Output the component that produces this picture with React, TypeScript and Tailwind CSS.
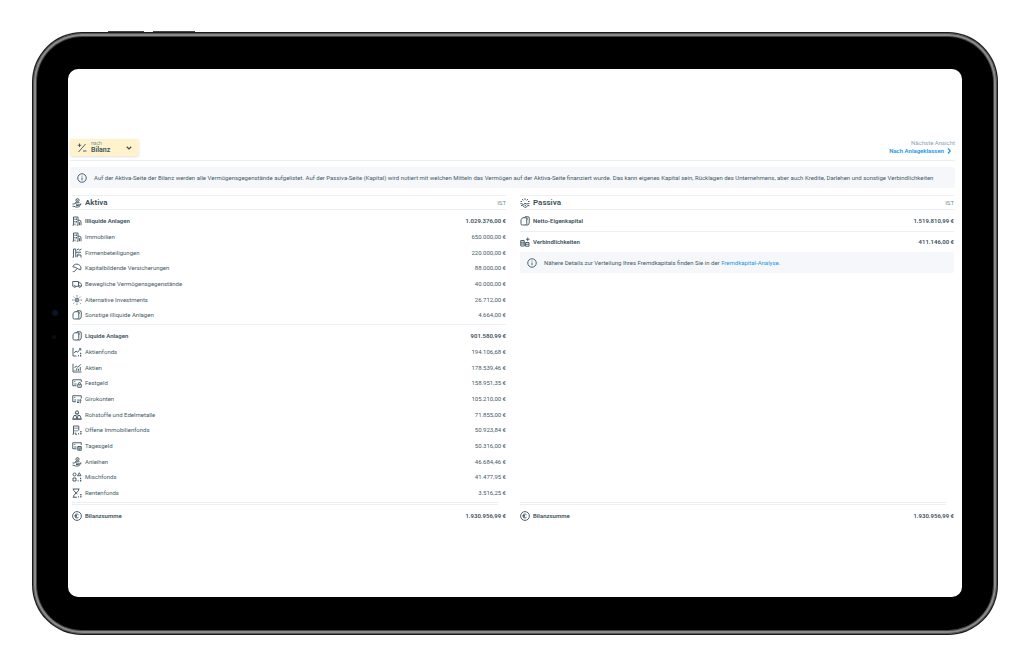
import type { ReactNode } from "react";

type Row = { icon: string; label: string; value: string };

// Line icons, drawn on a 20x20 grid
const icons: Record<string, ReactNode> = {
  handCoin: (
    <>
      <circle cx="11" cy="4.5" r="3.2" />
      <path d="M11 3.5v2M6 9.5h9M1 12h3l3-1 4 2.500h3M8 15h5l5-3.500M18.500 11.500l-5 6.500H7l-3-1.500H1" />
    </>
  ),
  handshake: (
    <>
      <path d="M10 .5v3.500M4.500 2l2 3M15.500 2l-2 3M1 7h3M16 7h3" />
      <path d="M1 11l3 .5 3 2 2.500-3 4 1.500 5.500-1M2 15.500l3-1 4 4h3l4-3.500 3 .5M9 13.500l3 2" />
    </>
  ),
  building: (
    <>
      <path d="M1 18.500h2V2h9v16.500H9.500M6 5v3M9 5v3M6 10v3M9 10v3M6 15v3.500" />
      <path d="M12 8.500h2.500A3.500 3.500 0 0 1 18 12v6.500M15 12.500v6" />
    </>
  ),
  factory: (
    <>
      <path d="M1 18.500h2V2h4.500v16.500M7.500 8.500H18M9.500 4.500l3-2.500 2.500 2L19 2" />
      <path d="M10.500 18.500V14H18v5M10.500 14l3-3" />
    </>
  ),
  umbrella: (
    <>
      <path d="M1.500 7.500C3.500 2.500 9 1 13 3c4 2 6 6 4.500 10.500l-4-1L7.500 9z" />
      <path d="M10 11L5 17c-1.500 1.500-3 .5-2.500-1" />
    </>
  ),
  truck: (
    <>
      <path d="M3 14.500H1.500V5H13v9.500H8M13 7.500h3.500l2.500 3.500v3.500h-1" />
      <circle cx="5.500" cy="15" r="1.800" />
      <circle cx="15.500" cy="15" r="1.800" />
    </>
  ),
  alternative: (
    <>
      <circle cx="10" cy="10" r="3.800" />
      <path d="M11.500 9a1.500 1.500 0 1 0 0 2M10 .5V3M10 17v2.500M.5 10H3M17 10h2.500M3 3.500l1.500 1.500M15.500 15.500L17 17M17 3.500L15.500 5M4.500 15.500L3 17" />
    </>
  ),
  wallet: (
    <>
      <path d="M16 18H4.500A2.500 2.500 0 0 1 2 15.500v-8L5 3.500h8.500v12L11 18" />
      <path d="M8 3.500L10 1.500h6a2.500 2.500 0 0 1 2.500 2.500V14L16 18M13.500 6h2.500" />
    </>
  ),
  chartDots: (
    <>
      <path d="M2 1.500V18h7M4.500 12l3.500-4 3 2.500 6-7M14 3.500h3.500V7" />
      <path d="M12 17.500h1.500M16 17.500h2.500M16 13h2.500" strokeWidth="2.800" />
    </>
  ),
  chartBars: (
    <path d="M2 1.500V18h17M5 10l3.500-4 3 2.500L17.500 3M6 15.500v-2M9.500 15.500v-5M13 15.500v-4M16.500 15.500V8" />
  ),
  cardLock: (
    <>
      <path d="M9 15.500H1.500v-12h17V8M4.500 7h2M4.500 12H9" />
      <path d="M11.500 12.500h7v6h-7zM13 12.500v-1.500a2 2 0 0 1 4 0v1.500M15 15v1" />
    </>
  ),
  cardArrows: (
    <>
      <path d="M8 15.500H1.500v-12h17V9M4.500 7h2M4.500 12H8" />
      <path d="M12 10.500V18M10 16l2 2 2-2M16.500 18.500V11M14.500 13l2-2 2 2" />
    </>
  ),
  cardCalendar: (
    <>
      <path d="M9 15.500H1.500v-12h17V8M4.500 7h2M4.500 12H9" />
      <path d="M11.500 11h7v7.500h-7zM11.500 14h7M13.500 16.500h3" />
    </>
  ),
  metals: (
    <path d="M8 2h4l1.500 5.500h-7zM10 7.500V11M4 11h4l1.500 7h-8zM12 11h4l2.500 7h-8zM1 18.500h18" />
  ),
  buildingFund: (
    <>
      <path d="M1 18.500h2V2h10.500v9M6 5v3M10 5v3M6 10v3M10 10v3M6.500 15v3.500H10" />
      <path d="M12.500 17.500H14M16.500 17.500H19M16.500 13.500H19" strokeWidth="2.800" />
    </>
  ),
  mixed: (
    <>
      <circle cx="5" cy="5" r="3" />
      <path d="M14.500 1.500l3.500 6h-7zM2 12h6v6H2z" />
      <path d="M11.500 17.500H13M16 17.500h2.500M16 13h2.500" strokeWidth="2.800" />
    </>
  ),
  hourglass: (
    <>
      <path d="M1.500 2H15M1.500 18.500H10M3.500 2v3l4.500 5-4.500 5v3.500M13 2v3l-4.500 5 2 2.500" />
      <path d="M12.500 17.500H14M16.500 17.500H19M16.500 13.500H19" strokeWidth="2.800" />
    </>
  ),
  coins: (
    <>
      <path d="M1.500 7h7v11h-7zM1.500 10.500h7M1.500 14h7M11 11h7v7.500h-7zM11 14.500h7" />
      <path d="M15.500 1v7M12 4.500h7" />
    </>
  ),
  copyright: (
    <>
      <circle cx="10" cy="10" r="8.800" />
      <path d="M13 7.500a4 4 0 1 0 0 5M6 9h4M6 11.500h4" />
    </>
  ),
  info: (
    <>
      <circle cx="10" cy="10" r="8.500" />
      <path d="M10 9v5.500M10 5.500v1.500" />
    </>
  ),
  plusMinus: <path d="M5 1v7M1.500 4.500h7M17 2L3 18M12 16h7" />,
};

function Icon({ name }: { name: string }) {
  return (
    <svg
      viewBox="0 0 20 20"
      className="size-2.5 shrink-0 text-[#455a64]"
      fill="none"
      stroke="currentColor"
      strokeWidth="1.900"
      aria-hidden="true"
    >
      {icons[name]}
    </svg>
  );
}

const illiquid: Row[] = [
  { icon: "building", label: "Illiquide Anlagen", value: "1.029.376,00 €" },
  { icon: "building", label: "Immobilien", value: "650.000,00 €" },
  { icon: "factory", label: "Firmenbeteiligungen", value: "220.000,00 €" },
  { icon: "umbrella", label: "Kapitalbildende Versicherungen", value: "88.000,00 €" },
  { icon: "truck", label: "Bewegliche Vermögensgegenstände", value: "40.000,00 €" },
  { icon: "alternative", label: "Alternative Investments", value: "26.712,00 €" },
  { icon: "wallet", label: "Sonstige illiquide Anlagen", value: "4.664,00 €" },
];

const liquid: Row[] = [
  { icon: "wallet", label: "Liquide Anlagen", value: "901.580,99 €" },
  { icon: "chartDots", label: "Aktienfonds", value: "194.106,68 €" },
  { icon: "chartBars", label: "Aktien", value: "178.539,46 €" },
  { icon: "cardLock", label: "Festgeld", value: "158.951,35 €" },
  { icon: "cardArrows", label: "Girokonten", value: "105.210,00 €" },
  { icon: "metals", label: "Rohstoffe und Edelmetalle", value: "71.855,00 €" },
  { icon: "buildingFund", label: "Offene Immobilienfonds", value: "50.923,84 €" },
  { icon: "cardCalendar", label: "Tagesgeld", value: "50.316,00 €" },
  { icon: "handCoin", label: "Anleihen", value: "46.684,46 €" },
  { icon: "mixed", label: "Mischfonds", value: "41.477,95 €" },
  { icon: "hourglass", label: "Rentenfonds", value: "3.516,25 €" },
];

const equity: Row[] = [{ icon: "wallet", label: "Netto-Eigenkapital", value: "1.519.810,99 €" }];
const debts: Row[] = [{ icon: "coins", label: "Verbindlichkeiten", value: "411.146,00 €" }];
const total: Row[] = [{ icon: "copyright", label: "Bilanzsumme", value: "1.930.956,99 €" }];

// The first row of each block is its sum and is set in bold
function Block({ rows, className = "" }: { rows: Row[]; className?: string }) {
  return (
    <table className={`w-full ${className}`}>
      <tbody>
        {rows.map((row, i) => (
          <tr key={row.label} className={`h-4 nth-[3n]:h-[15px] ${i === 0 ? "font-semibold text-[#3c505b]" : "font-normal"}`}>
            <th scope="row" className="p-0 text-left [font-weight:inherit]">
              <span className="flex items-center gap-[3px]">
                <Icon name={row.icon} />
                {row.label}
              </span>
            </th>
            <td className="p-0 text-right whitespace-nowrap">{row.value}</td>
          </tr>
        ))}
      </tbody>
    </table>
  );
}

function ColumnHeader({ icon, title }: { icon: string; title: string }) {
  return (
    <div className="flex h-[15px] items-center justify-between border-y border-[#eceff1]">
      <h2 className="flex items-center gap-[3px] text-[8px] font-semibold text-[#3c505b]">
        <Icon name={icon} />
        {title}
      </h2>
      <span className="text-[#78909c]">IST</span>
    </div>
  );
}

function InfoBox({ children, className = "" }: { children: ReactNode; className?: string }) {
  return (
    <div className={`flex min-h-[21px] items-center gap-[7px] rounded-xs bg-[#f5f7fb] px-[7px] ${className}`}>
      <Icon name="info" />
      <p>{children}</p>
    </div>
  );
}

function Total() {
  return (
    <div className="mt-auto">
      <div className="mr-2 h-[3px] border-y border-[#eceff1]" />
      <Block rows={total} className="mt-[3px]" />
    </div>
  );
}

function Bilanz() {
  return (
    <main className="pt-[70px] pr-[7px] pb-[73px] pl-0.5">
      {/* Toolbar */}
      <header className="flex items-start justify-between border-b border-[#eceff1] pb-1">
        <div className="flex h-[17px] w-[69px] items-center rounded-xs bg-[#fff3cd] px-[7px] text-[#3c505b] shadow-sm">
          <Icon name="plusMinus" />
          <div className="ml-1 flex flex-1 flex-col">
            <label htmlFor="view" className="text-[5px] leading-[5px] text-[#78909c]">
              nach
            </label>
            <select id="view" className="h-2 appearance-none text-[7px] leading-2 font-semibold focus:outline-none">
              <option>Bilanz</option>
            </select>
          </div>
          <svg viewBox="0 0 12 12" className="size-1.5" fill="none" stroke="currentColor" strokeWidth="2.400" aria-hidden="true">
            <path d="M1.500 3.500L6 8l4.500-4.500" />
          </svg>
        </div>
        <div className="flex flex-col items-end">
          <span className="leading-2 text-[#90a4ae]">Nächste Ansicht</span>
          <a href="#anlageklassen" className="flex items-center gap-0.5 pr-[3px] font-semibold text-[#1e96ea]">
            Nach Anlageklassen
            <svg viewBox="0 0 12 12" className="size-1.5" fill="none" stroke="currentColor" strokeWidth="2.400" aria-hidden="true">
              <path d="M4 1l4.500 5L4 11" />
            </svg>
          </a>
        </div>
      </header>

      <InfoBox className="mt-1.5">
        Auf der Aktiva-Seite der Bilanz werden alle Vermögensgegenstände aufgelistet. Auf der Passiva-Seite (Kapital)
        wird notiert mit welchen Mitteln das Vermögen auf der Aktiva-Seite finanziert wurde. Das kann eigenes Kapital
        sein, Rücklagen des Unternehmens, aber auch Kredite, Darlehen und sonstige Verbindlichkeiten
      </InfoBox>

      <div className="mt-[7px] grid grid-cols-2 gap-[14px] pr-px pl-0.5">
        {/* Aktiva */}
        <section className="flex flex-col">
          <ColumnHeader icon="handCoin" title="Aktiva" />
          <Block rows={illiquid} className="mt-[3px]" />
          <hr className="my-px mb-[3px] border-[#eceff1]" />
          <Block rows={liquid} className="mb-px" />
          <Total />
        </section>

        {/* Passiva */}
        <section className="flex flex-col">
          <ColumnHeader icon="handshake" title="Passiva" />
          <Block rows={equity} className="mt-[3px]" />
          <hr className="my-0.5 border-[#eceff1]" />
          <Block rows={debts} />
          <InfoBox className="mt-0.5">
            Nähere Details zur Verteilung Ihres Fremdkapitals finden Sie in der{" "}
            <a href="#fremdkapital" className="text-[#1e96ea]">
              Fremdkapital-Analyse
            </a>
            .
          </InfoBox>
          <Total />
        </section>
      </div>
    </main>
  );
}

export default function App() {
  return (
    <div className="bg-white pt-8 pr-[26px] pb-7 pl-8 font-[Roboto,sans-serif] text-[6px] leading-2 text-[#455a64]">
      {/* Tablet */}
      <div className="relative rounded-[50px] bg-[#1c1c1c] p-px">
        <span className="absolute -top-px left-[76px] h-px w-9 bg-[#444]" />
        <span className="absolute -top-px left-[121px] h-px w-[42px] bg-[#444]" />
        <div className="rounded-[49px] border border-[#555] bg-[#8a8a8a] p-0.5">
          <div className="rounded-[46px] bg-[#444] p-px">
            <div className="relative rounded-[45px] bg-black pt-8 pr-[31px] pb-[33px] pl-[31px]">
              <span className="absolute top-[273px] left-[15px] size-1.5 rounded-full bg-[#071527]" />
              <span className="absolute top-[298px] left-[15px] size-1 rounded-full bg-[#0c0f14]" />
              <div className="rounded-[10px] bg-white">
                <Bilanz />
              </div>
            </div>
          </div>
        </div>
      </div>
    </div>
  );
}
